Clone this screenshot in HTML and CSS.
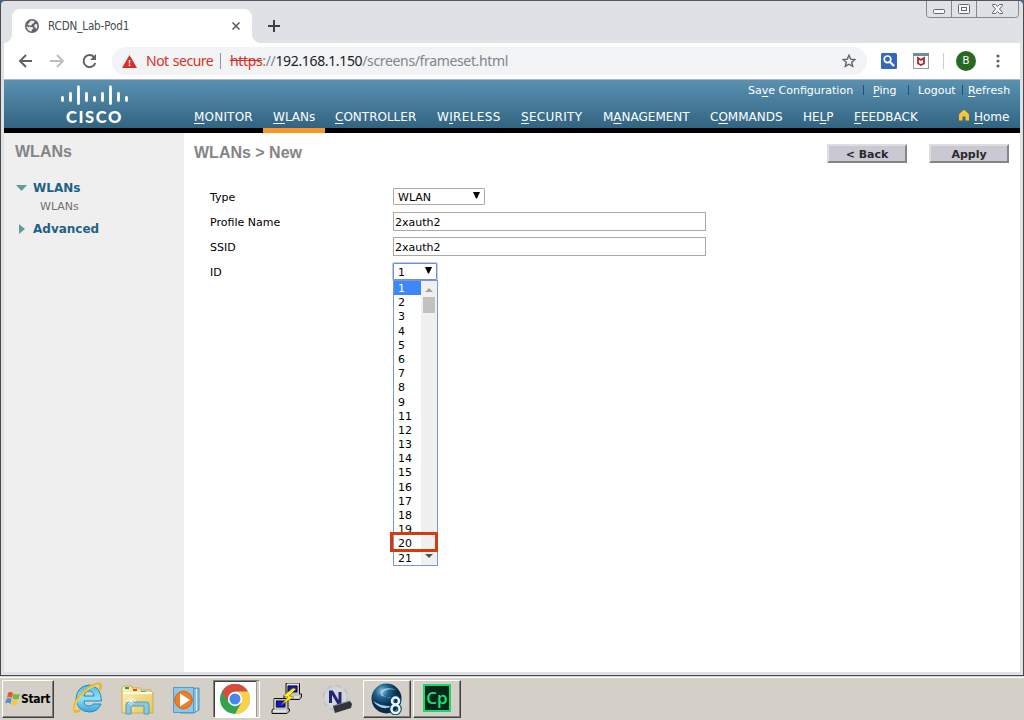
FILE: index.html
```html
<!DOCTYPE html>
<html lang="en">
<head>
<meta charset="utf-8">
<title>RCDN_Lab-Pod1</title>
<link rel="stylesheet" href="styles.css">
</head>
<body>
<div class="desktop">
<div class="window">
  <div class="titlebar">
    <div class="tab">
      <svg class="globe" width="14" height="14" viewBox="0 0 14 14"><circle cx="7" cy="7" r="7" fill="#5f6368"/><path d="M6 1.500L9.500 2L9 4L7 5L6.500 6.500L4 6.500L5 8L7.500 8L8.500 9.500L7 10.500L6.500 12.500Q2 12 1.500 7L4 8.500L4.500 7L2.500 5.500Z" fill="#e8eaec"/><path d="M10 5L12.400 5.500Q12.800 8 11.300 10.300L10 8.300L9 7.500Z" fill="#e8eaec"/></svg>
      <span class="tab-title">RCDN_Lab-Pod1</span>
      <svg class="tab-close" width="8" height="8" viewBox="0 0 8 8"><path d="M.5 .5L7.500 7.500M7.500 .5L.5 7.500" stroke="#55595e" stroke-width="1.500"/></svg>
    </div>
    <svg class="newtab" width="12" height="12" viewBox="0 0 12 12"><path d="M6 0V12M0 6H12" stroke="#3c4043" stroke-width="2"/></svg>
    <svg class="controls" width="94" height="18" viewBox="0 0 94 18"><path d="M.5 0V13.500Q.5 16.500 3.500 16.500H89.500Q92.500 16.500 92.500 13.500V0M25.500 0V16M50.500 0V16" fill="none" stroke="#85898e"/><g fill="#f5f6f8" stroke="#63676c"><rect x="7.500" y="8.500" width="11" height="4" rx="1"/><rect x="32.500" y="3.500" width="11" height="9" rx="1"/><rect x="35.500" y="6.500" width="5" height="3"/><path d="M66.500 3.500H69.500L71.500 5.500L73.500 3.500H76.500V4.500L73.500 8L76.500 11.500V12.500H73.500L71.500 10.500L69.500 12.500H66.500V11.500L69.500 8L66.500 4.500Z"/></g></svg>
  </div>
  <div class="toolbar">
    <svg class="nav-icons" width="80" height="16" viewBox="0 0 80 16" fill="none" stroke-width="2"><path d="M14 8H2M8 2L2 8L8 14" stroke="#5f6368"/><path d="M32 8H45M39 2L45 8L39 14" stroke="#bcbec1"/><path d="M76 4A6 6 0 1 0 77.300 10" stroke="#5f6368"/><path d="M78 1V7H72Z" fill="#5f6368"/></svg>
    <div class="omnibox">
      <svg width="15" height="13" viewBox="0 0 15 13"><path d="M7.500 0L15 13H0Z" fill="#d93025"/><path d="M7.500 5V8.500M7.500 9.500V11" stroke="#fff" stroke-width="1.500"/></svg>
      <span class="notsecure">Not secure</span><span class="omni-sep"></span>
      <span class="url"><s>https</s>://<b>192.168.1.150</b>/screens/frameset.html</span>
      <svg class="star" width="14" height="14" viewBox="0 0 14 14"><path d="M7 1.300L8.700 5.100L12.900 5.500L9.700 8.200L10.700 12.400L7 10.200L3.300 12.400L4.300 8.200L1.100 5.500L5.300 5.100Z" fill="none" stroke="#5f6368" stroke-width="1.400"/></svg>
    </div>
    <svg class="ext" width="16" height="16" viewBox="0 0 16 16"><rect width="16" height="16" rx="1.500" fill="#3367c0"/><circle cx="6.500" cy="6.300" r="3.300" fill="none" stroke="#fff" stroke-width="1.700"/><path d="M9 9L13 13" stroke="#fff" stroke-width="2.300"/></svg>
    <svg class="ext2" width="16" height="16" viewBox="0 0 16 16"><rect x=".5" y=".5" width="15" height="15" fill="#fff" stroke="#9b9b9b"/><path d="M0 0H16V3H0Z" fill="#738d97"/><path d="M5 5V10.500L8 12L11 10.500V5L8 7Z" fill="none" stroke="#b7232c" stroke-width="1.800"/></svg>
    <span class="tool-sep"></span>
    <span class="avatar">B</span>
    <svg class="dots" width="4" height="14" viewBox="0 0 4 14" fill="#5f6368"><circle cx="2" cy="2" r="1.600"/><circle cx="2" cy="7" r="1.600"/><circle cx="2" cy="12" r="1.600"/></svg>
  </div>
  <header class="header">
    <svg class="cisco-bars" width="68" height="21" viewBox="0 0 68 21" stroke="#fff" stroke-width="2.800" stroke-linecap="round"><path d="M1.500 12.500V15.500M9.500 8.500V15.500M17.500 2V18.500M25.500 8.500V15.500M33.500 12.500V15.500M41.500 8.500V15.500M49.500 2V18.500M57.500 8.500V15.500M65.500 12.500V15.500"/></svg>
    <div class="cisco">CISCO</div>
    <div class="header-main">
      <div class="util"><span class="u1">Sa<u>v</u>e Configuration</span><i></i><span class="u2"><u>P</u>ing</span><i></i><span class="u3">Logout</span><i></i><span class="u4"><u>R</u>efresh</span></div>
      <nav class="menu">
        <span class="m1"><u>M</u>ONITOR</span><span class="m2"><u>W</u>LANs</span><span class="m3"><u>C</u>ONTROLLER</span><span class="m4">W<u>I</u>RELESS</span><span class="m5"><u>S</u>ECURITY</span><span class="m6">M<u>A</u>NAGEMENT</span><span class="m7">C<u>O</u>MMANDS</span><span class="m8">HE<u>L</u>P</span><span class="m9"><u>F</u>EEDBACK</span>
        <svg width="10" height="11" viewBox="0 0 10 11"><path d="M5 0Q6 0 10 4.500V10.500H6.500V6.500H3.500V10.500H0V4.500Q4 0 5 0Z" fill="#fdc52b"/></svg>
        <span class="m10"><u>H</u>ome</span>
      </nav>
    </div>
  </header>
  <div class="strip"><span></span></div>
  <div class="content">
    <aside class="sidebar">
      <h2>WLANs</h2>
      <div class="side-item s1"><svg width="11" height="6" viewBox="0 0 11 6"><path d="M0 0H11L5.500 6Z" fill="#5f9c9b"/></svg><b>WLANs</b></div>
      <div class="side-sub">WLANs</div>
      <div class="side-item s2"><svg width="11" height="10" viewBox="0 0 11 10"><path d="M3 0L9 5L3 10Z" fill="#5f9c9b"/></svg><b>Advanced</b></div>
    </aside>
    <main class="main">
      <div class="page-head"><h1>WLANs &gt; New</h1><button class="back">&lt; Back</button><button class="apply">Apply</button></div>
      <div class="form">
        <div class="row"><label class="l1">Type</label><div class="select type"><span>WLAN</span><svg width="7" height="7" viewBox="0 0 7 7"><path d="M0 0H7L4 6.500H3Z"/></svg></div></div>
        <div class="row"><label class="l2">Profile Name</label><div class="input">2xauth2</div></div>
        <div class="row"><label class="l3">SSID</label><div class="input">2xauth2</div></div>
        <div class="row"><label class="l4">ID</label><div class="id-wrap"><div class="select id"><span>1</span><svg width="7" height="7" viewBox="0 0 7 7"><path d="M0 0H7L4 6.500H3Z"/></svg></div>
          <div class="dropdown">
            <div class="options"><span class="on">1</span><span>2</span><span>3</span><span>4</span><span>5</span><span>6</span><span>7</span><span>8</span><span>9</span><span>11</span><span>12</span><span>13</span><span>14</span><span>15</span><span>16</span><span>17</span><span>18</span><span>19</span><span>20</span><span>21</span></div>
            <div class="scroll"><svg width="8" height="4" viewBox="0 0 8 4"><path d="M0 4L4 0L8 4Z" fill="#a3a3a3"/></svg><span></span><svg class="down" width="8" height="4" viewBox="0 0 8 4"><path d="M0 0L4 4L8 0Z" fill="#505050"/></svg></div>
          </div>
          <div class="highlight"></div>
        </div></div>
      </div>
    </main>
  </div>
</div>
<div class="taskbar">
  <div class="start"><svg width="17" height="16" viewBox="0 0 17 16"><path d="M4 2Q6 0 9 2L8 7Q5 5 3 7Z" fill="#e7572b"/><path d="M9.500 2.500Q12 4 16 3L14.500 8Q11 9 8.500 7.500Z" fill="#78b83d"/><path d="M2.500 8Q5 6 7.500 8L6.500 13Q4 11 1 12.500Z" fill="#4e91d3"/><path d="M8 8.500Q11 10 14 9L13 13.500Q10 15 7 13.500Z" fill="#fac83a"/></svg><b>Start</b></div>
  <svg class="ie" width="30" height="32" viewBox="0 0 30 32">
    <defs><linearGradient id="iea" x1="0" y1="0" x2="0" y2="1"><stop offset="0" stop-color="#4fb8ec"/><stop offset=".5" stop-color="#8ae2fc"/><stop offset="1" stop-color="#36a7df"/></linearGradient></defs>
    <path d="M28.500 19H11Q11 24 16 24Q19 24 20.500 22H28Q25 30 16 30Q4 29 3 17Q4 4 16 3Q28 4 28.500 19ZM11 14H21Q20 9 16 9Q12 9 11 14Z" fill="url(#iea)" stroke="#2386c2" stroke-width="1"/>
    <path d="M26.500 8Q30 1 24 2Q15 4 6 15Q-1 25 2 29Q3 31 7 28" fill="none" stroke="#f1b51c" stroke-width="2.500"/><path d="M26 3Q16 4 7 15Q0 24 2 28" fill="none" stroke="#ffe668" stroke-width=".8"/>
  </svg>
  <svg class="folder" width="33" height="32" viewBox="0 0 33 32">
    <defs><linearGradient id="fd" x1="0" y1="0" x2="1" y2="1"><stop offset="0" stop-color="#fff3b8"/><stop offset="1" stop-color="#e5c65e"/></linearGradient></defs>
    <path d="M1 4L3 2H11V4H20V6H30V9H32V29H1Z" fill="url(#fd)" stroke="#cfad52"/><path d="M4 3H8V5H4Z" fill="#17a54a"/><path d="M12 5H16V7H12Z" fill="#d9492c"/><path d="M20 7H25V9H20Z" fill="#3da8dd"/><path d="M2 9H31" stroke="#fffbe0" stroke-width="2"/>
    <path d="M5 30V21Q5 18 8 18H25Q28 18 28 21V30H23V22H10V30Z" fill="#8ac7e2" stroke="#5599b9"/><path d="M5 17H15M10 12V22M7 14L13 20M13 14L7 20" stroke="#effcff" stroke-width=".8"/>
  </svg>
  <svg class="media" width="30" height="28" viewBox="0 0 30 28"><path d="M7 2L26 1V23L21 26H7Z" fill="#85bfe2" stroke="#4d91be"/><path d="M23.500 2V24" stroke="#d2f0ff"/><rect x=".5" y=".5" width="20" height="25" fill="#8fc6e6" stroke="#559bc6"/><circle cx="10.500" cy="13" r="8.800" fill="#f17d22" stroke="#d96012"/><path d="M7 6.500L17 13L7 19.500Z" fill="#fff"/></svg>
  <div class="chrome-btn"><svg width="30" height="30" viewBox="0 0 30 30"><circle cx="15" cy="15" r="15" fill="#30a451"/><path d="M2 7.500A15 15 0 0 1 28 7.500H15L8.500 18.500Z" fill="#d94b3d"/><path d="M28 7.500A15 15 0 0 1 15 30L21.500 18.500L15 7.500Z" fill="#ffd14b"/><circle cx="15" cy="15" r="7.200" fill="#fff"/><circle cx="15" cy="15" r="5.500" fill="#4587ed"/></svg><span></span></div>
  <svg class="putty" width="32" height="32" viewBox="0 0 32 32"><g stroke="#111"><path d="M15 1.500H28.500V12H30.500V15L28.500 17.500H13V14L15 12.500Z" fill="#c2c2c2"/><path d="M17 4H26V10H17Z" fill="#1115d5"/><path d="M3 16.500H17V27H18.500V29L16 31.500H1V28L3 26.500Z" fill="#c2c2c2"/><path d="M5 19H14V25H5Z" fill="#1115d5"/></g><path d="M2 29H15M15 15H28M4 17V26M16 2H28" stroke="#fff"/><path d="M22 6L12 14L17 15L10 23L23 15L18 14L25 7Z" fill="#ffef1b" stroke="#615600" stroke-width=".5"/></svg>
  <svg class="notes" width="31" height="30" viewBox="0 0 31 30"><circle cx="13.500" cy="13.500" r="11.700" fill="#c9cdd2" stroke="#c0c4c9" stroke-width="3" stroke-dasharray="5 4.190"/><circle cx="13.500" cy="13.500" r="10.800" fill="#d4d7da"/><path d="M8.500 19V8H10L16.500 19H18V8" fill="none" stroke="#252577" stroke-width="3"/><path d="M11 22L28 17L30 20L29 24L13 29Z" fill="#30343a"/><path d="M11 22L28 17" stroke="#747b83"/></svg>
  <div class="task-btn task8"><svg width="32" height="32" viewBox="0 0 32 32"><defs><radialGradient id="orb" cx=".35" cy=".25"><stop stop-color="#87c0dd"/><stop offset=".45" stop-color="#1e658f"/><stop offset="1" stop-color="#092a4a"/></radialGradient></defs><circle cx="15.500" cy="15.500" r="15" fill="url(#orb)"/><path d="M27 7Q14 3 10 8Q7 13 16 14Q26 15 23 22Q13 25 2 18Q9 28 20 24Q28 17 20 15Q8 13 13 8Q18 5 27 7Z" fill="#a3cbdc"/><g fill="none" stroke="#0c4061" stroke-width="4.500"><circle cx="24.500" cy="18" r="3.500"/><circle cx="24.500" cy="26" r="4"/></g><g fill="none" stroke="#e5f5fc" stroke-width="2.500"><circle cx="24.500" cy="18" r="3.500"/><circle cx="24.500" cy="26" r="4"/></g></svg></div>
  <div class="task-btn task-cp"><span>Cp</span></div>
</div>
</div>
</body>
</html>
```
FILE: styles.css
```css
* { box-sizing: border-box; }
body { margin: 0; width: 1024px; height: 720px; overflow: hidden; font-family: "DejaVu Sans", sans-serif; font-size: 11px; color: #000; }
svg { display: block; flex: none; }
.desktop { height: 720px; background: #386b9c; }
.window { height: 676px; padding: 0 3px; border: 1px solid #4b494c; border-top-color: #59525a; border-radius: 5px 5px 0 0; background: #dee1e6; }
.titlebar { height: 42px; display: flex; align-items: flex-start; }
.tab { position: relative; margin: 8px 0 0 8px; width: 240px; height: 34px; padding: 0 12px 0 13px; display: flex; align-items: center; background: #fff; border-radius: 8px 8px 0 0; }
.tab::before, .tab::after { content: ""; position: absolute; bottom: 0; width: 8px; height: 8px; }
.tab::before { left: -8px; background: radial-gradient(circle at 0 0, transparent 7.5px, #fff 8px); }
.tab::after { right: -8px; background: radial-gradient(circle at 100% 0, transparent 7.5px, #fff 8px); }
.tab-title { margin-left: 9px; font: 11.5px "DejaVu Sans Condensed", "DejaVu Sans", sans-serif; color: #45494d; letter-spacing: -.1px; white-space: nowrap; }
.tab-close { margin-left: auto; }
.newtab { margin: 19px 0 0 16px; }
.controls { margin: 0 0 0 auto; }
.toolbar { height: 36px; display: flex; align-items: center; background: #fff; }
.nav-icons { margin-left: 14px; }
.omnibox { margin-left: 14px; width: 755px; height: 28px; padding: 0 11px; border-radius: 14px; background: #f1f3f4; display: flex; align-items: center; font: 14px "Noto Sans", sans-serif; white-space: nowrap; }
.omnibox > svg:first-child { margin-left: -1px; }
.notsecure { margin-left: 9px; width: 67px; color: #d93025; letter-spacing: -.5px; word-spacing: 1px; margin-top: -2px; }
.omni-sep { margin: 0 9px 0 7px; width: 1px; height: 16px; background: #919498; }
.url { color: #80868b; letter-spacing: -.35px; margin-top: -2px; }
.url s { color: #d93025; }
.url b { color: #202124; font-weight: 400; }
.star { margin-left: auto; }
.ext { margin-left: 14px; }
.ext2 { margin-left: 16px; }
.tool-sep { width: 1px; height: 16px; margin: 0 12px 0 14px; background: #cbcdd0; }
.avatar { width: 20px; height: 20px; border-radius: 50%; background: #286823; color: #fff; text-align: center; font: 11px/20px Roboto, sans-serif; }
.dots { margin-left: 20px; }
.header { position: relative; height: 49px; border-top: 1px solid #b4b4b4; background: linear-gradient(#5a91b1, #316481); color: #fff; }
.cisco-bars { position: absolute; left: 57px; top: 5px; }
.cisco { position: absolute; left: 62px; top: 27px; font: 900 16.5px/20px Lato, sans-serif; letter-spacing: 1.6px; }
.header-main { margin-left: 190px; }
.header u { text-underline-offset: 2px; text-decoration-thickness: 1px; text-decoration-skip-ink: none; }
.util { height: 20px; display: flex; align-items: center; padding-left: 554px; white-space: nowrap; }
.util i { width: 1px; height: 10px; background: #294c70; }
.u1 { width: 115px; }
.util span + i + span { padding-left: 9px; }
.u2 { width: 44px; }
.u3 { width: 53px; }
.util .u4 { padding-left: 5px; letter-spacing: .1px; }
.menu { height: 28px; display: grid; align-items: center; grid-template-columns: 79px 62px 102px 84px 82px 107px 93px 51px 105px 16px 40px; font-size: 12px; white-space: nowrap; padding-top: 5px; }
.menu svg { margin-bottom: 3px; }
.m1 { letter-spacing: .2px; }
.m4 { letter-spacing: .35px; }
.m5 { letter-spacing: .3px; }
.m10 { margin-left: -1px; }
.strip { height: 5px; background: #000; padding-left: 259px; }
.strip span { display: block; width: 62px; height: 5px; background: #fb9424; }
.content { display: flex; height: 539px; background: #fff; }
.sidebar { width: 180px; background: #efefef; padding-left: 11px; }
h1, h2 { margin: 0; font: bold 16px/20px "Liberation Sans", sans-serif; color: #858585; }
.sidebar h2 { padding-top: 9px; }
.side-item { display: flex; align-items: center; color: #1e6186; font-size: 12px; height: 16px; }
.side-item svg { margin: 0 6px 0 1px; }
.s1 { margin-top: 18px; }
.side-sub { margin: 4px 0 0 25px; height: 14px; line-height: 14px; color: #707070; }
.s2 { margin-top: 7px; }
.main { flex: 1; padding-left: 10px; }
.page-head { display: flex; padding-top: 10px; }
.page-head h1 { width: 633px; }
button { margin: 1px 0 0; width: 80px; height: 19px; padding: 1px 0 0; border: 2px solid; border-color: #dedede #858585 #858585 #dedede; background: #c9c8d3; font: bold 11px "DejaVu Sans", sans-serif; color: #29292c; }
.apply { margin-left: 22px; }
.form { margin: 21px 0 0 16px; }
.row { display: flex; align-items: center; height: 25px; }
.row label { width: 183px; padding-top: 2px; }
.select { border: 1px solid #a9a9a9; border-radius: 1px; height: 17px; display: flex; align-items: center; justify-content: space-between; padding: 0 4px; background: #fff; }
.select span { padding-top: 2px; }
.select svg { margin-bottom: 2px; }
.type { width: 92px; }
.input { width: 313px; height: 19px; border: 1px solid #a9a9a9; padding-left: 1px; line-height: 20px; }
.id-wrap { position: relative; }
.id { width: 44px; border-color: #7291cc; box-shadow: 0 0 0 1px #b9cdf6; }
.dropdown { position: absolute; left: 0; top: 17px; width: 45px; height: 286px; border: 1px solid #7b98ce; background: #fff; display: flex; }
.options { width: 27px; }
.options span { display: block; height: 14.2px; line-height: 15px; padding-left: 4px; }
.options .on { background: #3d87f6; color: #fff; }
.scroll { flex: 1; background: #f0f0f0; display: flex; flex-direction: column; align-items: center; padding: 7px 0 7px; }
.scroll span { width: 12px; height: 16px; margin-top: 5px; background: #c1c1c1; }
.down { margin-top: auto; }
.highlight { position: absolute; left: -3px; top: 269px; width: 48px; height: 20px; border: 3px solid #d73b0d; }
.taskbar { height: 44px; display: flex; align-items: flex-start; background: #d4d0c8; border-top: 1px solid #d4d0c8; box-shadow: inset 0 1px #fff; padding: 3px 0 0 2px; }
.start { width: 52px; height: 38px; display: flex; align-items: center; padding-left: 1px; border: 1px solid; border-color: #fff #404040 #404040 #fff; box-shadow: inset -1px -1px #808080; font: 12px "DejaVu Sans Condensed", "DejaVu Sans", sans-serif; letter-spacing: -.3px; }
.ie { margin: 2px 0 0 19px; }
.folder { margin: 4px 0 0 18px; }
.media { margin: 7px 0 0 19px; }
.chrome-btn { margin-left: 10px; width: 47px; height: 38px; border: 1px solid; border-color: #808080 #fff #fff #808080; box-shadow: inset 1px 1px #404040; background: #fff; display: flex; align-items: center; padding-left: 6px; }
.chrome-btn span { margin-left: 6px; width: 3px; height: 36px; background: #d4d0c8; border-left: 1px solid #999; }
.putty { margin: 2px 0 0 11px; }
.notes { margin: 4px 0 0 19px; }
.task-btn { width: 48px; height: 38px; border: 1px solid; border-color: #fff #404040 #404040 #fff; box-shadow: inset -1px -1px #808080; display: flex; align-items: center; justify-content: center; }
.task8 { margin-left: 10px; }
.task-cp { margin-left: 2px; }
.task-cp span { width: 28px; height: 28px; margin-top: -3px; border: 2px solid #12dc6d; background: #06251b; color: #18e579; text-align: center; font: 600 17px/23px "Open Sans", sans-serif; }
```
